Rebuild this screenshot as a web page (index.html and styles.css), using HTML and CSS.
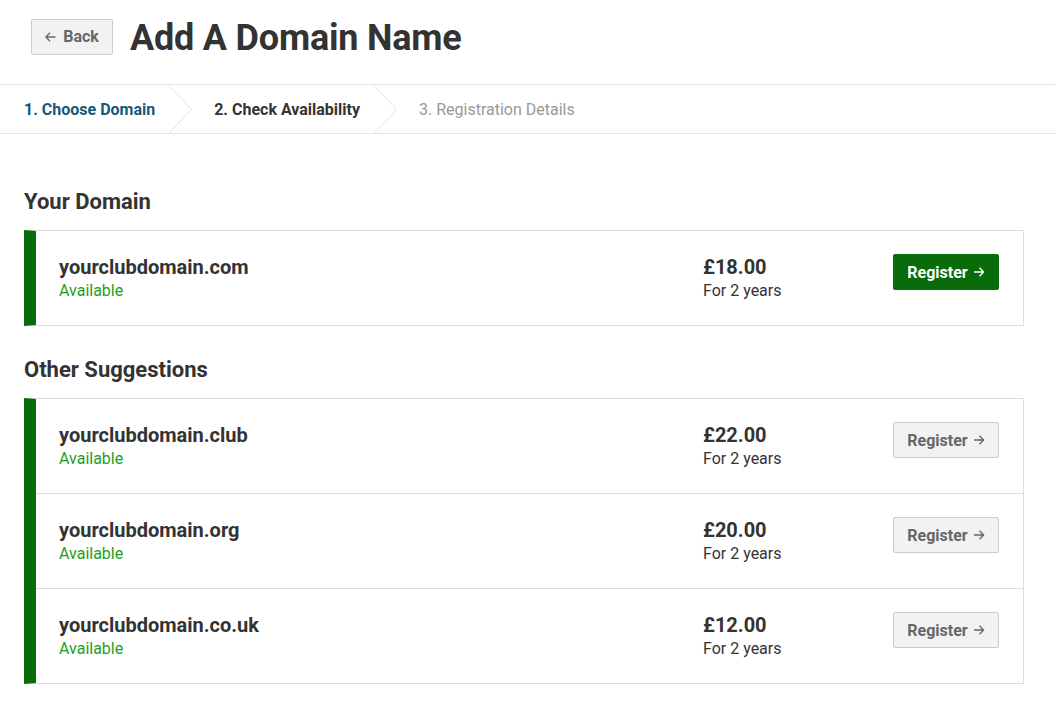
FILE: index.html
```html
<!DOCTYPE html>
<html lang="en">
<head>
<meta charset="utf-8">
<title>Add A Domain Name</title>
<link rel="stylesheet" href="styles.css">
</head>
<body>
<header class="page-header">
  <a class="btn-back" href="#"><svg class="ico ico-back" width="11" height="10" viewBox="0 0 11 10"><path d="M10.5 5H1M5 0.8L0.9 5 5 9.2" fill="none" stroke="currentColor" stroke-width="1.3"/></svg>Back</a>
  <h1 class="page-title">Add A Domain Name</h1>
</header>
<nav class="steps">
  <span class="step step-done">1. Choose Domain</span>
  <svg class="chev" width="24" height="49" viewBox="0 0 24 49"><polyline points="0.5,0 23.5,24.5 0.5,49" fill="none" stroke="#e3e3e3" stroke-width="1"/></svg>
  <span class="step step-current">2. Check Availability</span>
  <svg class="chev" width="24" height="49" viewBox="0 0 24 49"><polyline points="0.5,0 23.5,24.5 0.5,49" fill="none" stroke="#e3e3e3" stroke-width="1"/></svg>
  <span class="step step-todo">3. Registration Details</span>
</nav>
<main class="content">
  <h2 class="section-title">Your Domain</h2>
  <div class="card">
    <div class="row">
      <div class="domain"><div class="name">yourclubdomain.com</div><div class="status">Available</div></div>
      <div class="price"><div class="amount">£18.00</div><div class="period">For 2 years</div></div>
      <div class="action"><a class="btn btn-primary" href="#">Register<svg class="ico ico-next" width="11" height="10" viewBox="0 0 11 10"><path d="M0 5H9.5M5.5 0.8L9.6 5 5.5 9.2" fill="none" stroke="currentColor" stroke-width="1.3"/></svg></a></div>
    </div>
  </div>
  <h2 class="section-title">Other Suggestions</h2>
  <div class="card">
    <div class="row">
      <div class="domain"><div class="name">yourclubdomain.club</div><div class="status">Available</div></div>
      <div class="price"><div class="amount">£22.00</div><div class="period">For 2 years</div></div>
      <div class="action"><a class="btn btn-default" href="#">Register<svg class="ico ico-next" width="11" height="10" viewBox="0 0 11 10"><path d="M0 5H9.5M5.5 0.8L9.6 5 5.5 9.2" fill="none" stroke="currentColor" stroke-width="1.3"/></svg></a></div>
    </div>
    <div class="row">
      <div class="domain"><div class="name">yourclubdomain.org</div><div class="status">Available</div></div>
      <div class="price"><div class="amount">£20.00</div><div class="period">For 2 years</div></div>
      <div class="action"><a class="btn btn-default" href="#">Register<svg class="ico ico-next" width="11" height="10" viewBox="0 0 11 10"><path d="M0 5H9.5M5.5 0.8L9.6 5 5.5 9.2" fill="none" stroke="currentColor" stroke-width="1.3"/></svg></a></div>
    </div>
    <div class="row">
      <div class="domain"><div class="name">yourclubdomain.co.uk</div><div class="status">Available</div></div>
      <div class="price"><div class="amount">£12.00</div><div class="period">For 2 years</div></div>
      <div class="action"><a class="btn btn-default" href="#">Register<svg class="ico ico-next" width="11" height="10" viewBox="0 0 11 10"><path d="M0 5H9.5M5.5 0.8L9.6 5 5.5 9.2" fill="none" stroke="currentColor" stroke-width="1.3"/></svg></a></div>
    </div>
  </div>
</main>
</body>
</html>
```
FILE: styles.css
```css
* { box-sizing: border-box; }
html, body { margin: 0; padding: 0; background: #fff; }
body {
  font-family: Roboto, "Liberation Sans", Arial, sans-serif;
  color: #333;
  font-size: 16px;
}
a { text-decoration: none; }

.page-header {
  display: flex;
  align-items: center;
  height: 85px;
  padding: 0 0 11px 31px;
  border-bottom: 1px solid #e3e3e3;
}
.btn-back {
  display: inline-flex;
  align-items: center;
  height: 36px;
  width: 82px;
  justify-content: center;
  background: #f2f2f2;
  border: 1px solid #ccc;
  border-radius: 2px;
  color: #666;
  font-weight: 700;
  font-size: 16px;
}
.ico { display: block; flex: none; }
.ico-back { margin-right: 7px; }
.ico-next { margin-left: 6px; }
.page-title {
  margin: 3px 0 0 17px;
  font-size: 36px;
  font-weight: 700;
  color: #333;
  letter-spacing: -0.2px;
}

.steps {
  display: flex;
  align-items: center;
  height: 49px;
  padding-left: 24px;
  border-bottom: 1px solid #e3e3e3;
}
.step { font-size: 16px; }
.step-done { color: #15587a; font-weight: 700; }
.step-current { color: #333; font-weight: 700; }
.step-todo { color: #999; font-weight: 400; }
.chev { display: block; margin: 0 22px 0 13px; flex: none; }

.content { padding: 53px 31px 0 24px; }
.section-title {
  margin: 0 0 13px;
  font-size: 22px;
  font-weight: 700;
  color: #333;
  line-height: 30px;
}
.card {
  border: 1px solid #ddd;
  border-left: 12px solid #0a6b0a;
  margin-bottom: 29px;
}
.row {
  display: flex;
  align-items: flex-start;
  height: 95px;
  padding: 23px 24px 0 23px;
  border-top: 1px solid #ddd;
}
.row:first-child { border-top: none; height: 94px; }
.domain { flex: 1; }
.name { font-size: 20px; font-weight: 700; color: #333; line-height: 26px; }
.status { font-size: 16px; color: #1e9e1e; line-height: 22px; }
.price { width: 190px; }
.amount { font-size: 20px; font-weight: 700; color: #333; line-height: 26px; }
.period { font-size: 16px; color: #333; line-height: 22px; }
.action { flex: none; }
.btn {
  display: inline-flex;
  align-items: center;
  justify-content: center;
  height: 36px;
  width: 106px;
  border-radius: 2px;
  font-size: 16px;
  font-weight: 700;
}
.btn-primary { background: #0a6b0a; border: 1px solid #0a6b0a; color: #fff; }
.btn-default { background: #f2f2f2; border: 1px solid #ccc; color: #666; }
```
